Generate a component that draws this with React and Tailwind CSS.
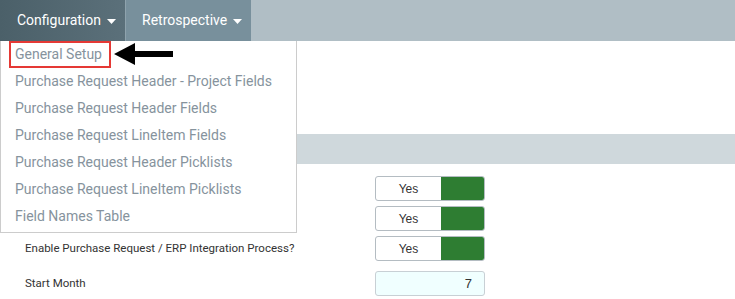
import React from 'react';

const menuItems = [
  'General Setup',
  'Purchase Request Header - Project Fields',
  'Purchase Request Header Fields',
  'Purchase Request LineItem Fields',
  'Purchase Request Header Picklists',
  'Purchase Request LineItem Picklists',
  'Field Names Table',
];

function Caret() {
  return (
    <svg width="9" height="5" viewBox="0 0 9 5" className="ml-[6px] mt-[2px]">
      <path d="M0 0 L9 0 L4.5 5 Z" fill="#fff" />
    </svg>
  );
}

function Toggle() {
  return (
    <div className="flex h-[25px] w-[110px] overflow-hidden rounded-[3px] border border-[#b4bcc2] bg-white">
      <div className="flex w-[65px] items-center justify-center text-[12px] text-[#333] font-['Liberation_Sans',Arial,sans-serif]">
        Yes
      </div>
      <div className="flex-1 bg-[#2e7d32]" />
    </div>
  );
}

function Row({ label, children }) {
  return (
    <div className="flex items-center">
      <div className="w-[375px] pl-[25px] text-[11.5px] text-[#333]">{label}</div>
      {children}
    </div>
  );
}

export default function App() {
  return (
    <div className="relative h-[299px] w-[735px] overflow-hidden bg-white font-['Roboto',sans-serif]">
      {/* top nav */}
      <div className="flex h-[41px] bg-[#b0bec5]">
        <div className="flex w-[125px] items-center pl-[17px] bg-gradient-to-r from-[#4b6069] to-[#5b707a] text-[14px] text-white">
          Configuration
          <Caret />
        </div>
        <div className="w-px bg-[#8fa3ad]" />
        <div className="flex w-[125px] items-center pl-[16px] bg-[#78909c] text-[14px] text-white">
          Retrospective
          <Caret />
        </div>
      </div>

      <div className="h-[93px]" />
      <div className="h-[30px] bg-[#cfd8dc]" />

      <div className="mt-[12px] flex flex-col gap-[5px]">
        <Row label="">
          <Toggle />
        </Row>
        <Row label="">
          <Toggle />
        </Row>
        <Row label="Enable Purchase Request / ERP Integration Process?">
          <Toggle />
        </Row>
        <div className="mt-[5px]">
          <Row label="Start Month">
            <div className="flex h-[25px] w-[110px] items-center justify-end rounded-[3px] border border-[#c8d0d5] bg-[#f0ffff] pr-[12px] text-[13px] text-[#333] font-['Liberation_Sans',Arial,sans-serif]">
              7
            </div>
          </Row>
        </div>
      </div>

      {/* dropdown menu */}
      <div className="absolute left-0 top-[41px] w-[297px] border border-t-0 border-[#cccccc] bg-white pb-[2px]">
        {menuItems.map((item, i) => (
          <div key={i} className="relative flex h-[27px] items-center pl-[14px] text-[14px] text-[#86939d]">
            {item}
            {i === 0 && (
              <>
                <div className="absolute left-[8px] top-0 h-[27px] w-[102px] border-2 border-[#e53935]" />
                <svg width="60" height="24" viewBox="0 0 60 24" className="absolute left-[113px] top-[1px]">
                  <path d="M0 12 L21 1 L21 9 L59 9 L59 15 L21 15 L21 23 Z" fill="#000" />
                </svg>
              </>
            )}
          </div>
        ))}
      </div>
    </div>
  );
}
